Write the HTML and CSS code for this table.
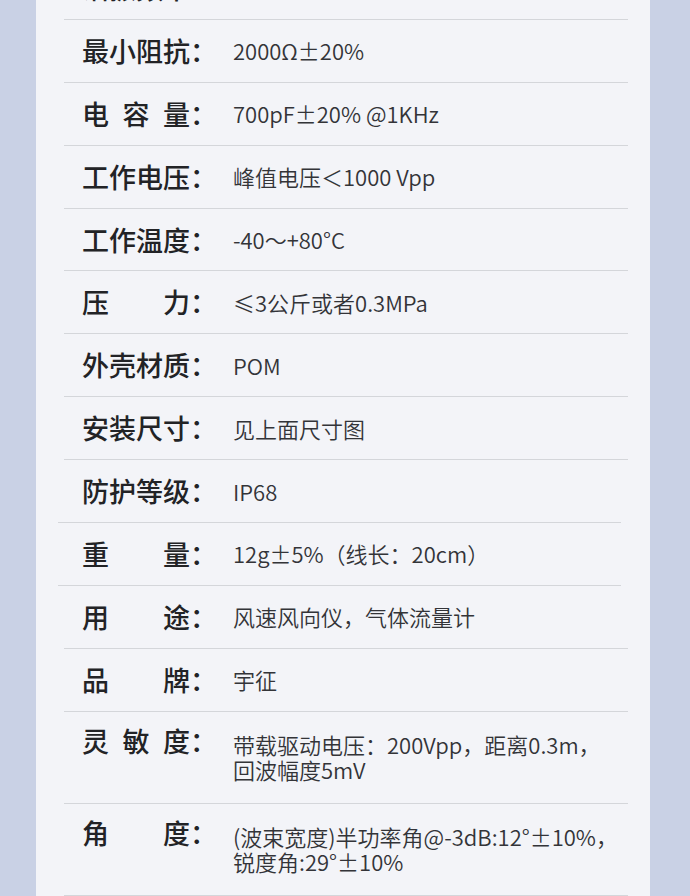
FILE: index.html
```html
<!DOCTYPE html>
<html lang="zh-CN">
<head>
<meta charset="utf-8">
<title>参数</title>
<link rel="stylesheet" href="styles.css">
</head>
<body>
<div class="page">
  <div class="card">
    <ul class="specs">
      <li class="row"><span class="label"><span class="name">谐振频率</span>：</span><span class="value">40KHz±1KHz</span></li>
      <li class="row"><span class="label"><span class="name">最小阻抗</span>：</span><span class="value">2000Ω±20%</span></li>
      <li class="row"><span class="label"><span class="name">电 容 量</span>：</span><span class="value">700pF±20% @1KHz</span></li>
      <li class="row"><span class="label"><span class="name">工作电压</span>：</span><span class="value">峰值电压＜1000 Vpp</span></li>
      <li class="row"><span class="label"><span class="name">工作温度</span>：</span><span class="value">-40～+80°C</span></li>
      <li class="row"><span class="label"><span class="name">压 力</span>：</span><span class="value">≤3公斤或者0.3MPa</span></li>
      <li class="row"><span class="label"><span class="name">外壳材质</span>：</span><span class="value">POM</span></li>
      <li class="row"><span class="label"><span class="name">安装尺寸</span>：</span><span class="value">见上面尺寸图</span></li>
      <li class="row row-shift"><span class="label"><span class="name">防护等级</span>：</span><span class="value">IP68</span></li>
      <li class="row row-shift"><span class="label"><span class="name">重 量</span>：</span><span class="value">12g±5%（线长：20cm）</span></li>
      <li class="row"><span class="label"><span class="name">用 途</span>：</span><span class="value">风速风向仪，气体流量计</span></li>
      <li class="row"><span class="label"><span class="name">品 牌</span>：</span><span class="value">宇征</span></li>
      <li class="row row-multi"><span class="label"><span class="name">灵 敏 度</span>：</span><span class="value">带载驱动电压：200Vpp，距离0.3m，<br>回波幅度5mV</span></li>
      <li class="row row-multi"><span class="label"><span class="name">角 度</span>：</span><span class="value">(波束宽度)半功率角@-3dB:12°±10%，<br>锐度角:29°±10%</span></li>
    </ul>
  </div>
</div>
</body>
</html>
```

FILE: styles.css
```css
html, body {
  margin: 0;
  padding: 0;
}
body {
  background: #c9d1e5;
  font-family: "Noto Sans CJK SC", "Noto Sans", sans-serif;
  overflow: hidden;
}
.page {
  padding: 0 40px 0 36px;
}
.card {
  background: #f3f4f8;
  margin-top: -43px;
  padding: 0 22px 0 28px;
  min-height: 1000px;
}
.specs {
  list-style: none;
  margin: 0;
  padding: 0;
}
.row {
  display: flex;
  align-items: center;
  min-height: 61.9px;
  box-sizing: content-box;
  padding: 0 0 0 18px;
  border-bottom: 1px solid #d4d6da;
}
.row-shift {
  margin-left: -6px;
  margin-right: 7px;
  padding-left: 24px;
}
.row-multi {
  align-items: flex-start;
  min-height: 0;
  padding-top: 14px;
  padding-bottom: 21px;
}
.label {
  display: flex;
  flex: none;
  width: 135px;
  font-size: 27px;
  line-height: 30px;
  font-weight: 500;
  color: #222326;
  margin-right: 16px;
  white-space: nowrap;
}
.name {
  display: block;
  width: 108px;
  text-align: justify;
  text-align-last: justify;
}
.value {
  font-size: 22px;
  line-height: 25px;
  font-weight: 350;
  color: #333438;
}
.row-multi .value {
  margin-top: 6px;
}
```
